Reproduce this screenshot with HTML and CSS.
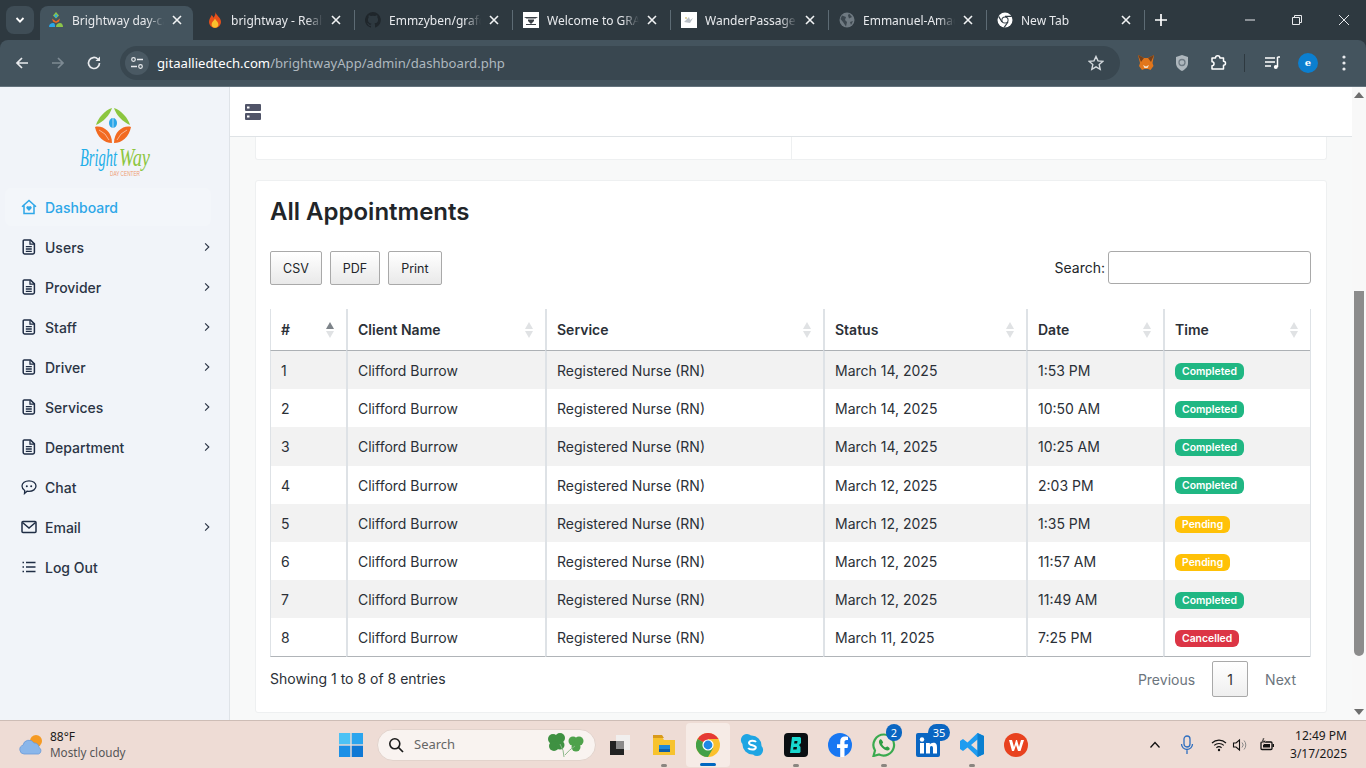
FILE: index.html
```html
<!DOCTYPE html>
<html lang="en">
<head>
<meta charset="utf-8">
<title>Brightway day-care</title>
<link rel="stylesheet" href="styles.css">
</head>
<body>
<svg class="sprite" aria-hidden="true">
  <symbol id="i-doc" viewBox="0 0 14 16"><path d="M2.2 1h6.3L12.4 4.9V13.6a1.4 1.4 0 0 1-1.4 1.4H2.6a1.4 1.4 0 0 1-1.4-1.4V2a1 1 0 0 1 1-1z" fill="none" stroke="currentColor" stroke-width="1.5"/><path d="M8 1.200V5.200h4.200" fill="none" stroke="currentColor" stroke-width="1.3"/><path d="M3.800 7.600h6M3.800 10h6M3.800 12.400h6" stroke="currentColor" stroke-width="1.3"/></symbol>
  <symbol id="i-chev" viewBox="0 0 8 12"><path d="M1.500 1.200 6.400 6 1.500 10.800" fill="none" stroke="currentColor" stroke-width="1.5"/></symbol>
  <symbol id="i-x" viewBox="0 0 12 12"><path d="M2 2l8 8M10 2l-8 8" stroke="currentColor" stroke-width="1.6"/></symbol>
  <symbol id="i-chrome" viewBox="0 0 16 16"><circle cx="8" cy="8" r="7.500" fill="#fff"/><circle cx="8" cy="8" r="3.600" fill="#2f3a42"/><circle cx="8" cy="8" r="2.600" fill="#fff"/><path d="M8 4.400h6.800M5 10 1.600 4.400M11 10 7.200 15.400" stroke="#2f3a42" stroke-width="1.2"/></symbol>
</svg>

<header class="chrome">
  <div class="tabstrip">
    <button class="tablist" aria-label="Search tabs"><svg class="ic10" viewBox="0 0 10 10"><path d="M1.500 3 5 6.600 8.500 3" fill="none" stroke="#fff" stroke-width="1.800"/></svg></button>
    <div class="tab tab-active">
      <svg class="fav" viewBox="0 0 16 16"><path d="M8 0 5 3.500 8 6.500l3-3z" fill="#8cc44a"/><circle cx="8" cy="4" r="1.400" fill="#2aa6e8"/><path d="M4 6.500 8 9.500l4-3-1 3L8 11 5 9.500z" fill="#f26a21"/><path d="M1 15c0-3 2-4 4-4s2 2 2 4z" fill="#2aa6e8"/><path d="M8 15c0-3 2-4 4-4s3 2 3 4z" fill="#8cc44a"/></svg>
      <span class="tab-title">Brightway day-care center</span>
      <svg class="tab-x"><use href="#i-x"/></svg>
    </div>
    <div class="tab">
      <svg class="fav" viewBox="0 0 16 16"><path d="M8.500 0c.6 3.500 5.500 5.500 5.500 10a6 6 0 0 1-12 0c0-3 1.800-4.500 2.500-7 1 .7 1.700 1.700 2 2.800C7.700 4 8.700 2 8.500 0z" fill="#e8501a"/><path d="M8 6.500c.7 2.200 3.400 3.500 3.400 5.800a3.400 3.400 0 0 1-6.800 0C4.600 10 7.300 8.700 8 6.500z" fill="#fbc02d"/></svg>
      <span class="tab-title">brightway - Realtime Database</span>
      <svg class="tab-x"><use href="#i-x"/></svg><i class="tab-sep"></i>
    </div>
    <div class="tab">
      <svg class="fav" viewBox="0 0 16 16"><path fill="#1f262b" d="M8 0a8 8 0 0 0-2.500 15.600c.4.100.5-.2.500-.4v-1.400c-2.200.5-2.700-1-2.700-1-.4-.9-.9-1.200-.9-1.200-.7-.5.100-.5.100-.5.800.100 1.200.8 1.200.8.700 1.200 1.900.9 2.300.7.100-.5.300-.9.500-1.100-1.800-.2-3.600-.9-3.600-4 0-.9.300-1.600.8-2.100-.1-.2-.4-1 .1-2.100 0 0 .7-.2 2.200.8a7.600 7.600 0 0 1 4 0c1.500-1 2.200-.8 2.200-.8.400 1.100.200 1.900.100 2.100.5.600.8 1.300.8 2.100 0 3.100-1.900 3.700-3.700 3.900.3.300.6.800.6 1.500v2.200c0 .2.100.5.600.4A8 8 0 0 0 8 0z"/></svg>
      <span class="tab-title">Emmzyben/grafcity</span>
      <svg class="tab-x"><use href="#i-x"/></svg><i class="tab-sep"></i>
    </div>
    <div class="tab">
      <svg class="fav" viewBox="0 0 16 16"><rect width="16" height="16" fill="#fff"/><path d="M1 5h14l-2.500 1.500h-9zM5 7.500h6v1.500L8 12 5 9zM3 12h10v1H3z" fill="#3a4046"/></svg>
      <span class="tab-title">Welcome to GRAFCITY</span>
      <svg class="tab-x"><use href="#i-x"/></svg><i class="tab-sep"></i>
    </div>
    <div class="tab">
      <svg class="fav" viewBox="0 0 16 16"><rect width="16" height="16" fill="#fff"/><path d="M3 10 8 5l1 3 3-2-3 5z" fill="#b9bfc6"/><circle cx="5" cy="6" r="1" fill="#d8c98a"/></svg>
      <span class="tab-title">WanderPassage Travel</span>
      <svg class="tab-x"><use href="#i-x"/></svg><i class="tab-sep"></i>
    </div>
    <div class="tab">
      <svg class="fav" viewBox="0 0 16 16"><circle cx="8" cy="8" r="7.500" fill="#6f7a82"/><path d="M3 3.500 7 5 6 8 8 10l-1 4.500L4 10 1.500 7zM10 1.500 13 5l-3 1.500-1-3zM11 10l3-1-2 4z" fill="#3c474f"/></svg>
      <span class="tab-title">Emmanuel-Amadi</span>
      <svg class="tab-x"><use href="#i-x"/></svg><i class="tab-sep"></i>
    </div>
    <div class="tab">
      <svg class="fav"><use href="#i-chrome"/></svg>
      <span class="tab-title">New Tab</span>
      <svg class="tab-x"><use href="#i-x"/></svg><i class="tab-sep"></i>
    </div>
    <svg class="newtab" viewBox="0 0 14 14"><path d="M7 1v12M1 7h12" stroke="#fff" stroke-width="1.700"/></svg>
    <div class="winctl">
      <svg class="ic12" viewBox="0 0 12 12"><path d="M1 6h10" stroke="#e8eaed" stroke-width="1"/></svg>
      <svg class="ic12" viewBox="0 0 12 12"><path d="M3.500 3V1.500h7v7H9M1.500 3.500h7v7h-7z" fill="none" stroke="#e8eaed" stroke-width="1"/></svg>
      <svg class="ic12" viewBox="0 0 12 12"><path d="M1 1l10 10M11 1 1 11" stroke="#e8eaed" stroke-width="1"/></svg>
    </div>
  </div>
  <div class="toolbar">
    <div class="nav-btns">
      <svg class="ic16" viewBox="0 0 16 16"><path d="M14 8H3M8 3 3 8l5 5" fill="none" stroke="#e8eaed" stroke-width="1.700"/></svg>
      <svg class="ic16" viewBox="0 0 16 16"><path d="M2 8h11M8 3l5 5-5 5" fill="none" stroke="#7d8a93" stroke-width="1.700"/></svg>
      <svg class="ic16" viewBox="0 0 16 16"><path d="M13.500 8A5.500 5.500 0 1 1 11.800 4" fill="none" stroke="#e8eaed" stroke-width="1.700"/><path d="M14 1.500V6H9.500z" fill="#e8eaed"/></svg>
    </div>
    <div class="omnibox">
      <span class="site-chip"><svg class="ic14" viewBox="0 0 14 14"><circle cx="3.500" cy="3.500" r="1.800" fill="none" stroke="#e8eaed" stroke-width="1.200"/><path d="M7 3.500h6M1 10.500h6" stroke="#e8eaed" stroke-width="1.400"/><circle cx="10.500" cy="10.500" r="1.800" fill="none" stroke="#e8eaed" stroke-width="1.200"/></svg></span>
      <span class="url"><b>gitaalliedtech.com</b>/brightwayApp/admin/dashboard.php</span>
      <svg class="star" viewBox="0 0 16 16"><path d="M8 1.500l2 4.400 4.800.5-3.600 3.200 1 4.700L8 11.900l-4.200 2.400 1-4.700L1.200 6.400 6 5.900z" fill="none" stroke="#d5dade" stroke-width="1.400"/></svg>
    </div>
    <div class="ext">
      <svg class="ext-ic" viewBox="0 0 18 18"><path d="M1 1l6 3h4l6-3-1.500 8 1 3-3 4-2.500-1H7.500L5 16l-3-4 1-3z" fill="#e2761b"/><path d="M6 11l1.500 3h3L12 11l-3 1.500z" fill="#f5e0c8"/><path d="M1 1l6 3-3 4zM17 1l-6 3 3 4z" fill="#76401a"/></svg>
      <svg class="ext-ic" viewBox="0 0 18 18"><path d="M9 1l6 2v6c0 4-3 6.500-6 8-3-1.500-6-4-6-8V3z" fill="#aeb7bd"/><circle cx="9" cy="8.500" r="3" fill="none" stroke="#6e7a83" stroke-width="1.300"/></svg>
      <svg class="ext-ic" viewBox="0 0 18 18"><path d="M3 4h3.500a2.200 2.200 0 0 1 4.400 0H14.500v3.300a2 2 0 0 1 0 4V15H3v-3.300a2 2 0 0 0 0-4z" fill="none" stroke="#fff" stroke-width="1.500" stroke-linejoin="round"/></svg>
      <i class="ext-sep"></i>
      <svg class="ext-ic ext-music" viewBox="0 0 18 18"><path d="M1 4h10M1 8h10M1 12h6" stroke="#fff" stroke-width="1.500"/><path d="M13.500 3v10" stroke="#fff" stroke-width="1.500"/><path d="M13.500 3H16" stroke="#fff" stroke-width="1.500"/><circle cx="11.800" cy="13" r="2" fill="#fff"/></svg>
      <span class="avatar">e</span>
      <svg class="dots" viewBox="0 0 4 16"><circle cx="2" cy="2" r="1.600" fill="#e8eaed"/><circle cx="2" cy="8" r="1.600" fill="#e8eaed"/><circle cx="2" cy="14" r="1.600" fill="#e8eaed"/></svg>
    </div>
  </div>
</header>

<div class="viewport">
  <aside class="sidebar">
    <div class="logo">
      <svg class="logo-svg" viewBox="0 0 72 72">
        <path d="M32 1C25 3 18 11 16 18 23 15 30 8 32 1z" fill="#8cc63f"/>
        <path d="M34 1C41 3 48 11 50 18 43 15 36 8 34 1z" fill="#8cc63f"/>
        <ellipse cx="33" cy="16" rx="4" ry="5" fill="#2aa6e8"/>
        <path d="M33 11v10" stroke="#f1f4f9" stroke-width="0.700"/>
        <path d="M15 20C22 18 32 24 32 36 24 36 17 30 15 20z" fill="#f26a21"/>
        <path d="M51 20C44 18 34 24 34 36 42 36 49 30 51 20z" fill="#f26a21"/>
        <path d="M19 23q7 3 10 10M47 23q-7 3-10 10" fill="none" stroke="#fbd9c5" stroke-width="0.700"/>
        <text class="logo-b" x="0" y="59" textLength="37" lengthAdjust="spacingAndGlyphs">Bright</text>
        <text class="logo-w" x="39" y="59" textLength="31" lengthAdjust="spacingAndGlyphs">Way</text>
        <text class="logo-d" x="30" y="69" textLength="30" lengthAdjust="spacingAndGlyphs">DAY CENTER</text>
      </svg>
    </div>
    <nav class="menu">
      <a class="item item-active">
        <svg class="mi" viewBox="0 0 16 16"><path d="M1 7.800 8 1.500l7 6.300M3 6.500V14.500h10V6.500" fill="none" stroke="currentColor" stroke-width="1.500"/><path d="M8 12 5.600 9.600a1.500 1.500 0 0 1 2.400-1.800 1.500 1.500 0 0 1 2.400 1.800z" fill="currentColor"/></svg>
        <span>Dashboard</span>
      </a>
      <a class="item"><svg class="mi"><use href="#i-doc"/></svg><span>Users</span><svg class="chev"><use href="#i-chev"/></svg></a>
      <a class="item"><svg class="mi"><use href="#i-doc"/></svg><span>Provider</span><svg class="chev"><use href="#i-chev"/></svg></a>
      <a class="item"><svg class="mi"><use href="#i-doc"/></svg><span>Staff</span><svg class="chev"><use href="#i-chev"/></svg></a>
      <a class="item"><svg class="mi"><use href="#i-doc"/></svg><span>Driver</span><svg class="chev"><use href="#i-chev"/></svg></a>
      <a class="item"><svg class="mi"><use href="#i-doc"/></svg><span>Services</span><svg class="chev"><use href="#i-chev"/></svg></a>
      <a class="item"><svg class="mi"><use href="#i-doc"/></svg><span>Department</span><svg class="chev"><use href="#i-chev"/></svg></a>
      <a class="item"><svg class="mi" viewBox="0 0 16 16"><path d="M8 1.800c3.900 0 7 2.300 7 5.300s-3.100 5.300-7 5.300c-.7 0-1.300-.1-2-.2L3.500 14.500l.2-3C2 10.500 1 8.900 1 7.100c0-3 3.100-5.300 7-5.300z" fill="none" stroke="currentColor" stroke-width="1.300"/><circle cx="5.800" cy="7.200" r="1" fill="currentColor"/><circle cx="10.200" cy="7.200" r="1" fill="currentColor"/></svg><span>Chat</span></a>
      <a class="item"><svg class="mi" viewBox="0 0 16 16"><rect x="1" y="2.500" width="14" height="11" rx="1" fill="none" stroke="currentColor" stroke-width="1.500"/><path d="M1.500 3.500 8 9l6.500-5.500" fill="none" stroke="currentColor" stroke-width="1.500"/></svg><span>Email</span><svg class="chev"><use href="#i-chev"/></svg></a>
      <a class="item"><svg class="mi" viewBox="0 0 16 16"><path d="M5 3.500h9.500M5 8h9.500M5 12.500h9.500" stroke="currentColor" stroke-width="1.300"/><path d="M1.500 3.500h1.500M1.500 8h1.500M1.500 12.500h1.500" stroke="currentColor" stroke-width="1.500"/></svg><span>Log Out</span></a>
    </nav>
  </aside>

  <div class="main">
    <div class="topbar">
      <svg class="server" viewBox="0 0 16 16"><rect width="16" height="7" rx="1" fill="#505468"/><rect y="9" width="16" height="7" rx="1" fill="#505468"/><rect x="2" y="2.500" width="2.500" height="2" fill="#fff"/><rect x="2" y="11.500" width="2.500" height="2" fill="#fff"/></svg>
    </div>
    <div class="content">
      <div class="frag"><div></div><div></div></div>
      <section class="card">
        <h3>All Appointments</h3>
        <div class="controls">
          <div class="dt-btns">
            <button class="dt-btn">CSV</button>
            <button class="dt-btn">PDF</button>
            <button class="dt-btn">Print</button>
          </div>
          <label class="search">Search:<input type="search" class="search-in"></label>
        </div>
        <table class="tbl">
          <colgroup><col class="c1"><col class="c2"><col class="c3"><col class="c4"><col class="c5"><col class="c6"></colgroup>
          <thead>
            <tr>
              <th><div class="th"><span>#</span><span class="sort sort-asc"><i></i><i></i></span></div></th>
              <th><div class="th"><span>Client Name</span><span class="sort"><i></i><i></i></span></div></th>
              <th><div class="th"><span>Service</span><span class="sort"><i></i><i></i></span></div></th>
              <th><div class="th"><span>Status</span><span class="sort"><i></i><i></i></span></div></th>
              <th><div class="th"><span>Date</span><span class="sort"><i></i><i></i></span></div></th>
              <th><div class="th"><span>Time</span><span class="sort"><i></i><i></i></span></div></th>
            </tr>
          </thead>
          <tbody>
            <tr><td>1</td><td>Clifford Burrow</td><td>Registered Nurse (RN)</td><td>March 14, 2025</td><td>1:53 PM</td><td><span class="badge b-ok">Completed</span></td></tr>
            <tr><td>2</td><td>Clifford Burrow</td><td>Registered Nurse (RN)</td><td>March 14, 2025</td><td>10:50 AM</td><td><span class="badge b-ok">Completed</span></td></tr>
            <tr><td>3</td><td>Clifford Burrow</td><td>Registered Nurse (RN)</td><td>March 14, 2025</td><td>10:25 AM</td><td><span class="badge b-ok">Completed</span></td></tr>
            <tr><td>4</td><td>Clifford Burrow</td><td>Registered Nurse (RN)</td><td>March 12, 2025</td><td>2:03 PM</td><td><span class="badge b-ok">Completed</span></td></tr>
            <tr><td>5</td><td>Clifford Burrow</td><td>Registered Nurse (RN)</td><td>March 12, 2025</td><td>1:35 PM</td><td><span class="badge b-wait">Pending</span></td></tr>
            <tr><td>6</td><td>Clifford Burrow</td><td>Registered Nurse (RN)</td><td>March 12, 2025</td><td>11:57 AM</td><td><span class="badge b-wait">Pending</span></td></tr>
            <tr><td>7</td><td>Clifford Burrow</td><td>Registered Nurse (RN)</td><td>March 12, 2025</td><td>11:49 AM</td><td><span class="badge b-ok">Completed</span></td></tr>
            <tr><td>8</td><td>Clifford Burrow</td><td>Registered Nurse (RN)</td><td>March 11, 2025</td><td>7:25 PM</td><td><span class="badge b-bad">Cancelled</span></td></tr>
          </tbody>
        </table>
        <div class="tfoot">
          <span>Showing 1 to 8 of 8 entries</span>
          <div class="pager"><span class="pg">Previous</span><span class="pg-cur">1</span><span class="pg">Next</span></div>
        </div>
      </section>
    </div>
  </div>

  <div class="scrollbar">
    <span class="sb-up"></span>
    <div class="sb-track"><div class="sb-thumb"></div></div>
    <span class="sb-down"></span>
  </div>
</div>

<footer class="taskbar">
  <div class="weather">
    <svg class="wx" viewBox="0 0 26 24"><circle cx="18" cy="8" r="6" fill="#f59a23"/><path d="M6 21a4.500 4.500 0 0 1-1-8.800A6 6 0 0 1 16 10a4.500 4.500 0 0 1 5 4.500A3.500 3.500 0 0 1 20.500 21z" fill="#8ab6ea" stroke="#6b9ad8" stroke-width="0.800"/></svg>
    <div class="wx-t"><span class="wx-temp">88°F</span><span class="wx-desc">Mostly cloudy</span></div>
  </div>
  <div class="tb-center">
    <svg class="winlogo" viewBox="0 0 24 24"><rect width="11.300" height="11.300" fill="#4cc2f5"/><rect x="12.700" width="11.300" height="11.300" fill="#2ba5ee"/><rect y="12.700" width="11.300" height="11.300" fill="#1b8fe6"/><rect x="12.700" y="12.700" width="11.300" height="11.300" fill="#0f78d4"/></svg>
    <div class="tb-search">
      <svg class="ic16" viewBox="0 0 16 16"><circle cx="6.800" cy="6.800" r="5" fill="none" stroke="#1a1a1a" stroke-width="1.600"/><path d="M10.500 10.500 15 15" stroke="#1a1a1a" stroke-width="1.700"/></svg>
      <span class="tb-search-t">Search</span>
      <svg class="clover" viewBox="0 0 40 26"><g fill="#3f9142"><circle cx="7" cy="7" r="5"/><circle cx="14" cy="6" r="5"/><circle cx="8" cy="14" r="5"/><circle cx="14" cy="13" r="4.500"/></g><g fill="#4ea24b"><circle cx="27" cy="9" r="4.500"/><circle cx="33" cy="9" r="4.500"/><circle cx="30" cy="15" r="4.500"/></g><path d="M14 12q4 6 4 13M29 14q-6 4-10 9" fill="none" stroke="#8cb98a" stroke-width="1"/></svg>
    </div>
    <div class="tb-slot tb-first">
      <svg class="tb-ic" viewBox="0 0 24 24"><rect x="8" y="2" width="14" height="15" fill="#f1efee"/><rect x="2" y="8" width="14" height="14" fill="#222"/><rect x="8" y="8" width="8" height="8" fill="#8b8b8b"/></svg>
    </div>
    <div class="tb-slot tb-run">
      <svg class="tb-ic" viewBox="0 0 24 24"><path d="M1 4h9l2 3h11v15H1z" fill="#f7c32e"/><path d="M1 2h9l2 3H1z" fill="#d99a1c"/><rect x="7" y="12" width="11" height="7" fill="#1e88d8"/><rect x="7" y="16" width="11" height="3" fill="#0f5fa8"/></svg>
    </div>
    <div class="tb-slot tb-on">
      <svg class="tb-ic" viewBox="0 0 24 24"><circle cx="12" cy="12" r="12" fill="#fbc02d"/><path d="M12 12 1.600 6A12 12 0 0 1 22.400 6H12z" fill="#e53935"/><path d="M12 12 1.600 6A12 12 0 0 0 12 24l5.200-9z" fill="#43a047"/><circle cx="12" cy="12" r="5.600" fill="#fff"/><circle cx="12" cy="12" r="4.400" fill="#1e88e5"/></svg>
    </div>
    <div class="tb-slot">
      <svg class="tb-ic" viewBox="0 0 24 24"><path d="M7 1a6 6 0 0 1 4 1.500 10 10 0 0 1 10.500 10.500A6 6 0 0 1 17 23a6 6 0 0 1-4-1.500A10 10 0 0 1 2.500 11 6 6 0 0 1 7 1z" fill="#1ea5e3"/><path d="M16 9c-1-1.500-6.500-2-7 .8-.3 3 7 2 6.800 4.800-.4 2.700-6.300 2.400-7.600.4" fill="none" stroke="#fff" stroke-width="2"/></svg>
    </div>
    <div class="tb-slot tb-run">
      <svg class="tb-ic" viewBox="0 0 24 24"><rect width="24" height="24" rx="4" fill="#0a0f12"/><path fill-rule="evenodd" d="M8 4h8l1 1v5l-2 2 1.500 2v5l-1 1H6zM10.500 8l-.4 2.500h3L13.500 8zM9.500 14l-.4 2.500h3.500l.4-2.500z" fill="#18d8cf"/></svg>
    </div>
    <div class="tb-slot">
      <svg class="tb-ic" viewBox="0 0 24 24"><circle cx="12" cy="12" r="12" fill="#1877f2"/><path d="M16.500 24V15h3l.6-3.700h-3.600V9c0-1 .5-2 2.100-2H20V3.800S18.500 3.500 17 3.500c-3 0-4.800 1.800-4.800 5v2.800H9V15h3.200v9z" fill="#fff"/></svg>
    </div>
    <div class="tb-slot tb-run">
      <svg class="tb-ic" viewBox="0 0 24 24"><path d="M12 1.500A10.500 10.500 0 0 0 3 17.500L1.500 23l5.600-1.500A10.500 10.500 0 1 0 12 1.500z" fill="#f1e3dc" stroke="#3aaa4f" stroke-width="2.200"/><path d="M8 6.500c-2 1.500-1 5 2 8s6 4 7.500 2c.7-1-.1-1.800-2-3-1-.5-1.300.8-2 .8-1 0-3.300-2.300-3.300-3.300 0-.7 1.300-1 .8-2-1-2-2-3.300-3-2.500z" fill="#2f9e44"/></svg>
      <span class="count c-wa">2</span>
    </div>
    <div class="tb-slot">
      <svg class="tb-ic" viewBox="0 0 24 24"><rect width="24" height="24" rx="2" fill="#0a66c2"/><circle cx="6" cy="6.500" r="2.200" fill="#fff"/><rect x="4" y="10" width="4" height="10.500" fill="#fff"/><path d="M10 10h3.800v1.500c.7-1 1.900-1.800 3.500-1.800 3 0 3.700 2 3.700 4.800v6h-4v-5.300c0-1.300-.2-2.300-1.600-2.300S14 14 14 15.300v5.200h-4z" fill="#fff"/></svg>
      <span class="count c-li">35</span>
    </div>
    <div class="tb-slot tb-run">
      <svg class="tb-ic" viewBox="0 0 24 24"><path d="M17.500 0 24 3v18l-6.500 3-10-9.500-4.500 3.500L0 16V8l3-2 4.500 3.500zM17.500 6.500 11 12l6.500 5.500z" fill="#1f9cf0"/><path d="M17.500 0 24 3v18l-6.500 3z" fill="#0a7fd0"/></svg>
    </div>
    <div class="tb-slot">
      <svg class="tb-ic" viewBox="0 0 24 24"><circle cx="12" cy="12" r="12" fill="#e8421f"/><path d="M5 7h3l2 7 2-7h1l2 7 2-7h3l-3.500 11h-2.500L12 12l-2 6H8z" fill="#fff"/></svg>
    </div>
  </div>
  <div class="tray">
    <svg class="ic12 tray-up" viewBox="0 0 12 12"><path d="M1.500 8.500 6 3.500l4.500 5" fill="none" stroke="#111" stroke-width="1.300"/></svg>
    <svg class="tray-mic" viewBox="0 0 14 20"><rect x="4" y="1" width="6" height="11" rx="3" fill="none" stroke="#2f6fc0" stroke-width="1.300"/><path d="M1.500 9a5.500 5.500 0 0 0 11 0M7 14.500V19" fill="none" stroke="#2f6fc0" stroke-width="1.300"/></svg>
    <svg class="ic16 tray-wifi" viewBox="0 0 16 16"><path d="M1 6a10 10 0 0 1 14 0M3.200 8.400a7 7 0 0 1 9.600 0M5.400 10.700a4 4 0 0 1 5.200 0" fill="none" stroke="#111" stroke-width="1.200"/><circle cx="8" cy="13" r="1.200" fill="#111"/></svg>
    <svg class="ic16 tray-vol" viewBox="0 0 16 16"><path d="M1.500 6h2.500l3.500-3v10l-3.500-3H1.500z" fill="none" stroke="#111" stroke-width="1.100"/><path d="M10 5.500a3.500 3.500 0 0 1 0 5M12 3.500a6.500 6.500 0 0 1 0 9" fill="none" stroke="#888" stroke-width="1"/></svg>
    <svg class="ic16 tray-bat" viewBox="0 0 16 16"><rect x="2" y="5" width="11" height="7.500" rx="1" fill="#eedcd5" stroke="#111" stroke-width="1.300"/><rect x="4" y="7" width="7" height="3.500" fill="#111"/><rect x="13.500" y="7" width="1.500" height="3" fill="#111"/><path d="M4 1 2.500 5H5l-1 3 3-4.500H4.500L5.500 1z" fill="#111" stroke="#eedcd5" stroke-width="0.500"/></svg>
    <div class="clock"><span>12:49 PM</span><span>3/17/2025</span></div>
  </div>
</footer>
</body>
</html>
```

FILE: styles.css
```css
* { box-sizing: border-box; }
html, body { margin: 0; padding: 0; height: 768px; overflow: hidden; }
body { display: flex; flex-direction: column; width: 1366px; font-family: Inter, "Liberation Sans", sans-serif; color: #212529; background: #fff; }
.sprite { display: none; }
.ic10 { width: 10px; height: 10px; }
.ic12 { width: 12px; height: 12px; flex: none; }
.ic14 { width: 14px; height: 14px; }
.ic16 { width: 16px; height: 16px; flex: none; }

/* browser chrome */
.chrome { height: 87px; flex: none; background: #2e3940; border-bottom: 1px solid #64737d; }
.tabstrip { height: 40px; display: flex; align-items: flex-end; padding-left: 6px; }
.tablist { width: 28px; height: 28px; margin: 0 6px 6px 0; border: 0; border-radius: 8px; background: #3f4d56; display: flex; align-items: center; justify-content: center; padding: 0; }
.tab { width: 158px; height: 34px; display: flex; align-items: center; padding: 0 0 6px 8px; flex: none; color: #e8eaed; font: 12px "Noto Sans", "Open Sans", sans-serif; }
.tab-active { background: #44545e; border-radius: 8px 8px 0 0; width: 153px; margin-right: 6px; }
.fav { width: 16px; height: 16px; flex: none; }
.tab-title { width: 92px; margin-left: 8px; white-space: nowrap; overflow: hidden; flex: none; -webkit-mask-image: linear-gradient(90deg, #000 82%, transparent); mask-image: linear-gradient(90deg, #000 82%, transparent); }
.tab-x { width: 12px; height: 12px; margin-left: 7px; flex: none; color: #f1f3f4; }
.tab-sep { width: 1px; height: 20px; margin-left: 12px; background: #5d6b74; flex: none; }
.newtab { width: 14px; height: 14px; margin: 0 0 13px 7px; flex: none; }
.winctl { display: flex; gap: 35px; margin: 0 0 14px 76px; }
.toolbar { height: 46px; background: #44545e; border-radius: 8px 8px 0 0; display: flex; align-items: center; }
.nav-btns { display: flex; gap: 20px; padding-left: 14px; width: 120px; flex: none; }
.omnibox { width: 1000px; height: 34px; border-radius: 17px; background: #394750; display: flex; align-items: center; padding-left: 5px; flex: none; }
.site-chip { width: 24px; height: 24px; border-radius: 50%; background: #4a5963; display: flex; align-items: center; justify-content: center; flex: none; }
.url { margin-left: 8px; font: 13.130px "Noto Sans", "Open Sans", sans-serif; color: #aeb8bf; white-space: nowrap; flex: 1; }
.url b { font-weight: 400; color: #fff; }
.star { width: 16px; height: 16px; margin-right: 16px; flex: none; }
.ext { display: flex; align-items: center; flex: none; padding-left: 17px; }
.ext-ic { width: 18px; height: 18px; margin-right: 18px; flex: none; }
.ext-sep { width: 1px; height: 18px; background: #2e3940; margin: 0 19px 0 -1px; }
.ext-music { margin-right: 16px; }
.avatar { width: 20px; height: 20px; border-radius: 50%; background: #0b7fd0; color: #fff; font: 700 10px/20px "DejaVu Serif", serif; text-align: center; }
.dots { width: 4px; height: 16px; margin-left: 24px; }

/* page */
.viewport { flex: 1; min-height: 0; display: flex; overflow: hidden; }
.sidebar { width: 230px; flex: none; background: #f1f4f9; border-right: 1px solid #dfe3e8; }
.logo { height: 100px; padding: 20px 0 0 80px; }
.logo-svg { width: 72px; height: 72px; display: block; }
.logo-b { font: italic 26px "Liberation Serif", serif; fill: #22aee8; }
.logo-w { font: italic 26px "Liberation Serif", serif; fill: #8cc63f; }
.logo-d { font: 6.500px "Liberation Sans", sans-serif; fill: #ef9b72; }
.menu { display: flex; flex-direction: column; }
.item { height: 40px; display: flex; align-items: center; font-size: 14px; font-weight: 500; color: #2b3445; margin: 0 19px 0 5px; padding-left: 16px; }
.item span { flex: 1; margin-left: 8px; }
.item-active { color: #2ea7e8; background: #f3f6fa; border-radius: 6px; height: 38px; margin: 1px 18px 1px 5px; }
.mi { width: 16px; height: 16px; flex: none; color: #1f2d45; }
.item-active .mi { color: #2ea7e8; }
.chev { width: 6px; height: 10px; flex: none; color: #2b3445; }
.main { flex: 1; min-width: 0; display: flex; flex-direction: column; background: #f8f9f9; }
.topbar { height: 50px; flex: none; background: #fff; border-bottom: 1px solid #dfe3e6; display: flex; align-items: center; padding-left: 15px; }
.server { width: 16px; height: 16px; }
.content { flex: 1; padding: 0 25px; overflow: hidden; }
.frag { height: 23px; display: grid; grid-template-columns: 536px 1fr; background: #fff; border: 1px solid #eef0f1; border-top: 0; border-radius: 0 0 3px 3px; }
.frag div:first-child { border-right: 1px solid #eef0f1; }
.card { margin-top: 20px; height: 533px; background: #fff; border: 1px solid #eef0f1; border-radius: 3px; padding: 15px 15px 0 14px; }
.card h3 { margin: 0; font-size: 24px; font-weight: 600; line-height: 32px; color: #212529; }
.controls { display: flex; justify-content: space-between; align-items: flex-start; margin-top: 23px; height: 58px; }
.dt-btns { display: flex; gap: 8px; }
.dt-btn { height: 34px; padding: 0 12px; border: 1px solid #a9a9a9; border-radius: 2px; background: linear-gradient(#fff, #e9e9e9); font: 12.500px Inter, sans-serif; color: #212529; }
.search { display: flex; align-items: center; gap: 3px; font-size: 14px; }
.search-in { width: 203px; height: 33px; border: 1px solid #a9a9a9; border-radius: 3px; background: #fff; padding: 0; }
.tbl { width: 1041px; table-layout: fixed; border-collapse: separate; border-spacing: 0; font-size: 14px; border-right: 1px solid #dee2e6; }
.c1 { width: 76px; } .c2 { width: 199px; } .c3 { width: 278px; } .c4 { width: 203px; } .c5 { width: 137px; } .c6 { width: 147px; }
.tbl th { height: 42px; padding: 0 12px 0 10px; border-left: 2px solid #dee2e6; border-bottom: 1px solid #adb1b5; font-weight: 600; text-align: left; color: #2b3037; }
.tbl th:first-child, .tbl td:first-child { border-left-width: 1px; }
.th { display: flex; justify-content: space-between; align-items: center; }
.sort { display: flex; flex-direction: column; gap: 2px; }
.sort i { width: 0; height: 0; border-left: 4px solid transparent; border-right: 4px solid transparent; }
.sort i:first-child { border-bottom: 7px solid #e0e2e4; }
.sort i:last-child { border-top: 7px solid #e0e2e4; }
.sort-asc i:first-child { border-bottom-color: #7d8389; }
.tbl td { height: 38.200px; padding: 1px 10px 0; border-left: 2px solid #dee2e6; color: #2b3037; white-space: nowrap; }
.tbl tbody tr:nth-child(odd) td { background: #f2f2f2; }
.tbl tbody tr:last-child td { border-bottom: 1px solid #b0b4b8; }
.badge { display: inline-block; height: 17px; padding: 0 7px; border-radius: 6px; font-size: 10.400px; font-weight: 600; line-height: 17px; color: #fff; vertical-align: middle; }
.b-ok { background: #20b783; }
.b-wait { background: #ffc107; }
.b-bad { background: #dc3545; }
.tfoot { display: flex; justify-content: space-between; align-items: center; height: 44px; font-size: 14px; color: #2b3037; }
.pager { display: flex; align-items: center; color: #6c757d; }
.pg { padding: 2px 15px 0; }
.pg-cur { width: 36px; height: 36px; margin: 0 2px; padding-top: 2px; border: 1px solid #a9a9a9; border-radius: 2px; background: linear-gradient(#fff, #efefef); color: #333; display: flex; align-items: center; justify-content: center; }

/* scrollbar */
.scrollbar { width: 14px; flex: none; background: #f8f8f8; display: flex; flex-direction: column; align-items: center; }
.sb-up, .sb-down { width: 0; height: 0; border-left: 5px solid transparent; border-right: 5px solid transparent; margin: 5px 0; }
.sb-up { border-bottom: 6px solid #6e6e6e; }
.sb-down { border-top: 6px solid #6e6e6e; }
.sb-track { flex: 1; width: 100%; padding: 188px 2px 0 2px; }
.sb-thumb { height: 365px; background: #8c8c8c; border-radius: 0 0 5px 5px; }

/* taskbar */
.taskbar { height: 48px; flex: none; display: flex; align-items: center; background: #eedcd5; border-top: 1px solid #cdbdb6; font: 12px "Noto Sans", "Open Sans", sans-serif; color: #1a1a1a; }
.weather { width: 339px; display: flex; align-items: center; padding-left: 18px; flex: none; }
.wx { width: 26px; height: 24px; flex: none; }
.wx-t { display: flex; flex-direction: column; margin-left: 6px; line-height: 16px; }
.wx-desc { color: #555; font-size: 11.700px; line-height: 15px; }
.tb-center { display: flex; align-items: center; flex: none; }
.winlogo { width: 24px; height: 24px; flex: none; }
.tb-search { width: 219px; height: 32px; margin-left: 14px; border-radius: 16px; background: #f9f3f0; border: 1px solid #e2d3cc; display: flex; align-items: center; padding-left: 10px; }
.tb-search-t { margin-left: 10px; padding-bottom: 2px; font-size: 13px; color: #666; flex: 1; }
.clover { width: 40px; height: 26px; margin-right: 9px; }
.tb-slot { width: 44px; height: 44px; flex: none; display: flex; align-items: center; justify-content: center; position: relative; }
.tb-first { margin-left: 2px; }
.tb-ic { width: 24px; height: 24px; }
.tb-run::after { content: ""; position: absolute; left: 19px; bottom: 0; width: 6px; height: 3px; border-radius: 2px; background: #8a8580; }
.tb-on { background: #f6ebe6; border-radius: 4px; }
.tb-on::after { content: ""; position: absolute; left: 14px; bottom: 1px; width: 16px; height: 3px; border-radius: 2px; background: #0067c0; }
.count { position: absolute; top: 1px; height: 17px; border-radius: 9px; background: #0a66c2; color: #fff; font-size: 11px; line-height: 17px; text-align: center; }
.c-wa { left: 24px; width: 16px; }
.c-li { left: 22px; width: 22px; }
.tray { flex: 1; display: flex; align-items: center; padding-left: 111px; }
.tray-mic { width: 14px; height: 20px; margin-left: 19px; flex: none; }
.tray-wifi { margin-left: 17px; }
.tray-vol { margin-left: 5px; }
.tray-bat { margin-left: 11px; }
.clock { display: flex; flex-direction: column; align-items: flex-end; margin-left: 16px; line-height: 18px; width: 56px; white-space: nowrap; }
```
